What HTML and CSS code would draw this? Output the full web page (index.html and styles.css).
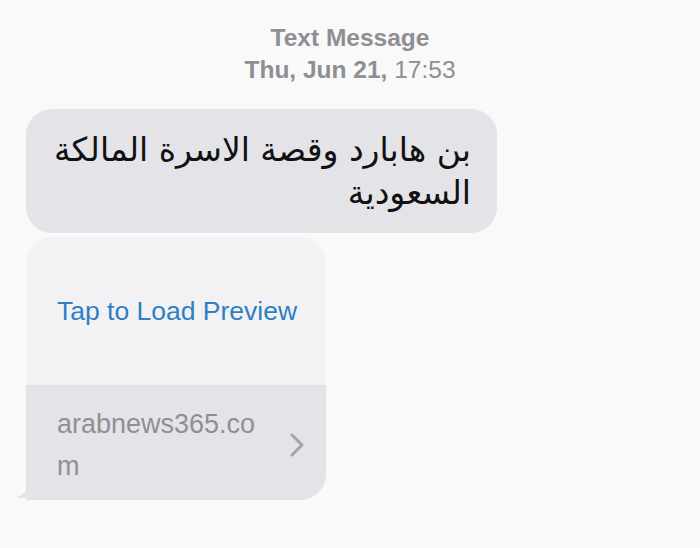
FILE: index.html
```html
<!DOCTYPE html>
<html lang="en">
<head>
    <meta charset="UTF-8">
    <meta name="viewport" content="width=device-width, initial-scale=1.0">
    <title>Text Message</title>
    <link rel="stylesheet" href="styles.css">
</head>
<body>
    <div class="header">
        <div class="service">Text Message</div>
        <div class="date"><b>Thu, Jun 21,</b> 17:53</div>
    </div>

    <div class="chat">
        <div class="bubble" dir="rtl" lang="ar">بن هابارد وقصة الاسرة المالكة<br>السعودية</div>

        <div class="link-bubble">
            <div class="preview">Tap to Load Preview</div>
            <div class="site">
                <span class="site-name">arabnews365.co<br>m</span>
                <svg class="chevron" width="14" height="24" viewBox="0 0 14 24">
                    <polyline points="2,2 12,12 2,22" fill="none" stroke="#a4a4a9" stroke-width="3" stroke-linecap="round" stroke-linejoin="round"/>
                </svg>
                <svg class="tail" width="30" height="24" viewBox="0 0 30 24">
                    <path d="M10 0 V12 C10 16.5 6 19.5 0 21.5 C7 23 13 22 17 19.5 C20 22 24 24 30 24 H10 Z" fill="#e4e4e8"/>
                </svg>
            </div>
        </div>
    </div>
</body>
</html>
```

FILE: styles.css
```css
body {
    margin: 0;
    background-color: #f9f9f9;
    font-family: "Liberation Sans", Arial, sans-serif;
}

.header {
    padding-top: 22px;
    text-align: center;
    color: #8e8e93;
    font-size: 24.5px;
    line-height: 32px;
}

.service {
    font-weight: bold;
}

.date b {
    font-weight: bold;
}

.chat {
    padding: 23px 0 0 26px;
}

.bubble {
    box-sizing: border-box;
    width: 471px;
    padding: 19px 26px;
    background-color: #e4e4e8;
    border-radius: 26px;
    font-family: "DejaVu Sans", sans-serif;
    font-size: 33px;
    line-height: 43px;
    color: #111;
    text-align: right;
}

.link-bubble {
    width: 300px;
    margin-top: 4px;
}

.preview {
    height: 148px;
    display: flex;
    align-items: center;
    padding-left: 31px;
    background-color: #f2f2f4;
    border-radius: 26px 26px 0 0;
    color: #2f7ec6;
    font-size: 26.5px;
}

.site {
    position: relative;
    height: 115px;
    display: flex;
    align-items: center;
    justify-content: space-between;
    padding: 0 22px 0 31px;
    background-color: #e4e4e8;
    border-radius: 0 0 26px 6px;
    color: #8f8f94;
    font-size: 27px;
    line-height: 42px;
}

.site-name {
    padding-top: 4px;
}

.chevron {
    margin-top: 4px;
}

.tail {
    position: absolute;
    left: -10px;
    bottom: 0;
}
```
